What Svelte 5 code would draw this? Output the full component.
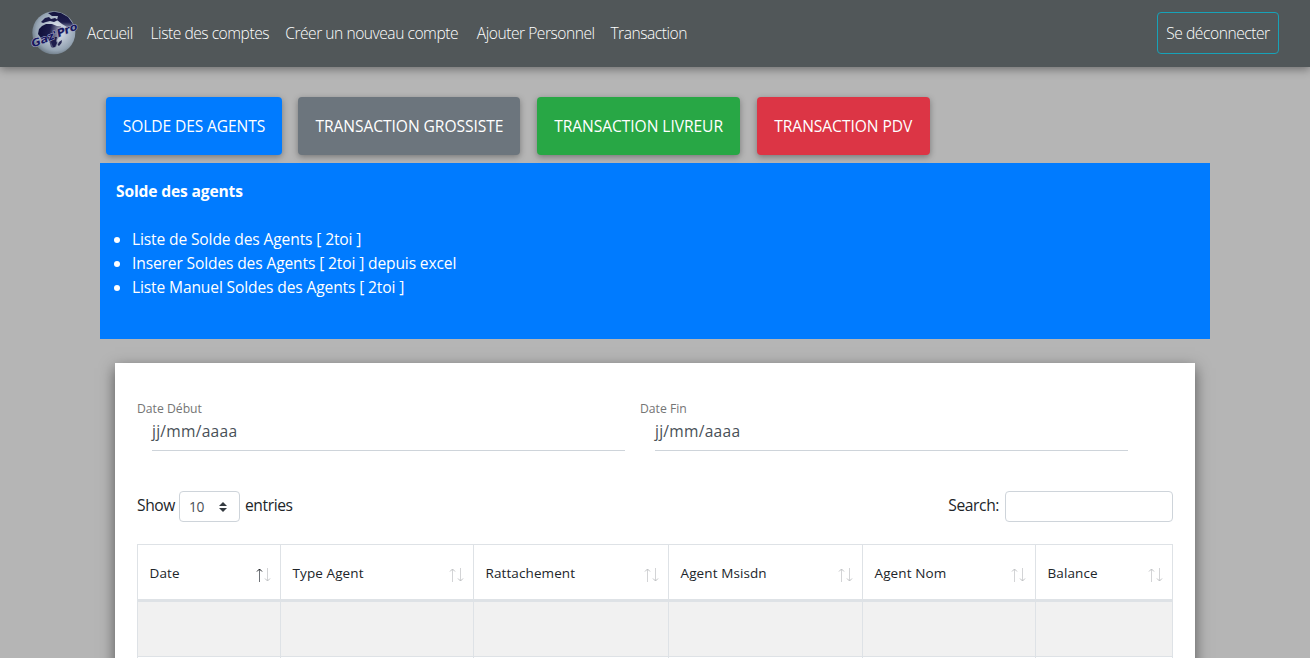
<script>
  const nav = [
    { label: 'Accueil', w: 48 },
    { label: 'Liste des comptes', w: 119 },
    { label: 'Créer un nouveau compte', w: 176 },
    { label: 'Ajouter Personnel', w: 118 },
    { label: 'Transaction', w: 75 }
  ];
  const tabs = [
    { label: 'SOLDE DES AGENTS', kind: 'primary', w: 176 },
    { label: 'TRANSACTION GROSSISTE', kind: 'secondary', w: 222 },
    { label: 'TRANSACTION LIVREUR', kind: 'success', w: 203.6 },
    { label: 'TRANSACTION PDV', kind: 'danger', w: 173 }
  ];
  const links = [
    'Liste de Solde des Agents [ 2toi ]',
    'Inserer Soldes des Agents [ 2toi ] depuis excel',
    'Liste Manuel Soldes des Agents [ 2toi ]'
  ];
  const columns = [
    { label: 'Date', sorted: true },
    { label: 'Type Agent' },
    { label: 'Rattachement' },
    { label: 'Agent Msisdn' },
    { label: 'Agent Nom' },
    { label: 'Balance' }
  ];
</script>

<header>
  <svg class="logo" width="48" height="48" viewBox="0 0 48 48" aria-label="Gaz'Pro">
    <defs>
      <radialGradient id="globe" cx="55%" cy="45%" r="58%">
        <stop offset="0" stop-color="#f0f2f8" />
        <stop offset=".45" stop-color="#b9c3d1" />
        <stop offset=".8" stop-color="#94a3b2" />
        <stop offset="1" stop-color="#6b7883" />
      </radialGradient>
      <linearGradient id="land" x1="0" y1="0" x2="1" y2=".2">
        <stop offset="0" stop-color="#0e0e38" />
        <stop offset=".5" stop-color="#1b1b4a" />
        <stop offset="1" stop-color="#1b1b4a" stop-opacity=".15" />
      </linearGradient>
      <linearGradient id="north" x1="0" y1="0" x2="0" y2="1">
        <stop offset="0" stop-color="#14143f" />
        <stop offset=".6" stop-color="#1c1c4c" />
        <stop offset="1" stop-color="#1c1c4c" stop-opacity=".2" />
      </linearGradient>
    </defs>
    <circle cx="23.8" cy="23.8" r="21.5" fill="url(#globe)" />
    <path d="M18 4 24 2.8 31 4 38 8 43 15 44 20 37 18 32 15 27 11 28 7 22 7Z" fill="url(#north)" />
    <path d="m11 13 4-4 4-1 2 2 4-1 3 2-4 2-4-1-4 1-3 1Z" fill="#191947" />
    <path d="m9 20 3-3 4-2 6 0 5 2 4 0 2 6-3 4-3 4 1 3-2 4-3 1-2-1-2-7-4-2-4 0-3-4Z" fill="url(#land)" />
    <path d="m21 28 6 0-1 4 1 2-2 4-2 0-2-5Z" fill="#1d1d4c" />
    <path d="m29 33 3-2-.5 3-2.5 3-1.5-1Z" fill="#252751" />
    <text x="3" y="38.5" transform="rotate(-22 3 38.5)" textLength="49" lengthAdjust="spacingAndGlyphs">Gaz'Pro</text>
  </svg>
  <nav>
    {#each nav as item}
      <span class="nav-item" style="width:{item.w}px">{item.label}</span>
    {/each}
  </nav>
  <button class="logout">Se déconnecter</button>
</header>

<main>
  <div class="tabs">
    {#each tabs as tab}
      <button class="tab {tab.kind}" style="width:{tab.w}px">{tab.label}</button>
    {/each}
  </div>
  <section class="panel">
    <h1>Solde des agents</h1>
    <ul>
      {#each links as link}<li>{link}</li>{/each}
    </ul>
  </section>
  <section class="card">
    <div class="dates">
      {#each ['Date Début', 'Date Fin'] as label}
        <div class="date">
          <span class="label">{label}</span>
          <div class="field">jj/mm/aaaa</div>
        </div>
      {/each}
    </div>
    <div class="tools">
      <div class="length">
        <span class="show">Show</span>
        <div class="select">
          <span>10</span>
          <svg width="8" height="10" viewBox="0 0 8 10"><path d="M0 4 4 0 8 4ZM0 6h8L4 10Z" fill="#343a40" /></svg>
        </div>
        <span class="entries">entries</span>
      </div>
      <div class="search"><span>Search:</span><input aria-label="Search" /></div>
    </div>
    <div class="table">
      {#each columns as col}
        <div class="th">
          <span>{col.label}</span>
          <svg width="16" height="16" viewBox="0 0 16 16" fill="none">
            <path d="M4.5 15V2" stroke={col.sorted ? '#6f7378' : '#d3d4d6'} />
            <path d="M2 4.5 4.5 2 7 4.5" stroke={col.sorted ? '#16191d' : '#bfc1c3'} />
            <path d="M12.5 1v13" stroke="#d3d4d6" />
            <path d="m10 11.5 2.5 2.5 2.5-2.5" stroke="#bfc1c3" />
          </svg>
        </div>
      {/each}
      {#each columns as _}<div class="td odd"></div>{/each}
      {#each columns as _}<div class="td"></div>{/each}
    </div>
  </section>
</main>

<style>
  :global(body) {
    background: #b5b5b5;
    overflow: hidden;
  }
  :global(#app) {
    height: 658px;
    overflow: hidden;
    font-family: 'Open Sans', 'Noto Sans', sans-serif;
    font-size: 15.6px;
    line-height: 24px;
    color: #212529;
  }
  :global(#app) * { box-sizing: border-box; }
  button { font: inherit; color: #fff; padding: 0; white-space: nowrap; }
  header {
    height: 67px;
    display: flex;
    align-items: center;
    padding: 0 31px 1px 30px;
    background: #515759;
    box-shadow: 0 2px 9px rgba(0, 0, 0, .42);
    position: relative;
    color: #fff;
    font-weight: 350;
  }
  .logo { flex: none; overflow: visible; }
  .logo text {
    font: italic bold 10.5px 'DejaVu Sans', sans-serif;
    fill: #17175f;
    stroke: #a9adc8;
    stroke-width: .9px;
    paint-order: stroke;
  }
  nav { display: flex; gap: 15.6px; margin-left: 9px; letter-spacing: -.47px; }
  .nav-item { white-space: nowrap; }
  .logout {
    margin-left: auto;
    width: 122px;
    height: 42px;
    border: 1px solid #17a2b8;
    border-radius: 4px;
    background: none;
    letter-spacing: -.45px;
  }
  main { padding: 30px 100px 0; }
  .tabs { display: flex; gap: 16.4px; padding-left: 6px; }
  .tab {
    height: 58px;
    border: 0;
    border-radius: 4px;
    box-shadow: 0 2px 6px rgba(0, 0, 0, .34);
    letter-spacing: -.06px;
  }
  .primary { background: #007bff; letter-spacing: -.12px; }
  .secondary { background: #6c757d; }
  .success { background: #28a745; }
  .danger { background: #dc3545; }
  .panel {
    margin-top: 8px;
    height: 176px;
    padding: 16px;
    background: #007bff;
    color: #fff;
  }
  h1 { margin: 0 0 24px; font-size: 15.6px; line-height: 24px; font-weight: 700; letter-spacing: -.15px; }
  ul { margin: 0; padding-left: 16px; letter-spacing: -.14px; }
  .card {
    margin: 24px 15px 0;
    height: 400px;
    padding: 36px 22px 0;
    background: #fff;
    box-shadow: 0 5px 14px rgba(0, 0, 0, .52);
  }
  .dates { display: grid; grid-template-columns: 503px 488px; }
  .label { display: block; font-size: 12.2px; line-height: 20px; color: #757575; }
  .field {
    margin: 0 0 0 15px;
    width: 473px;
    height: 32px;
    border-bottom: 1px solid #ced4da;
    line-height: 24px;
    color: #495057;
    letter-spacing: .25px;
  }
  .tools { display: flex; justify-content: space-between; margin-top: 40px; height: 31px; letter-spacing: -.4px; }
  .length, .search { display: flex; align-items: center; }
  .show, .entries, .search span { padding-bottom: 3px; }
  .show { width: 42px; }
  .select {
    width: 61px;
    height: 31px;
    display: flex;
    align-items: center;
    justify-content: space-between;
    padding: 0 12px 0 9px;
    border: 1px solid #ced4da;
    border-radius: 4px;
    font-size: 13.8px;
    color: #495057;
  }
  .entries { margin-left: 5px; }
  .search { gap: 6px; }
  input { width: 168px; height: 31px; border: 1px solid #ced4da; border-radius: 4px; }
  .table {
    margin-top: 22px;
    display: grid;
    grid-template-columns: 143px 193px 195px 194px 173px 138px;
    grid-template-rows: 58px 55px 55px;
  }
  .th, .td { border-left: 1px solid #dee2e6; }
  .th:nth-child(6n), .td:nth-child(6n) { border-right: 1px solid #dee2e6; }
  .th {
    border-top: 1px solid #dee2e6;
    border-bottom: 3px solid #dee2e6;
    display: flex;
    align-items: center;
    justify-content: space-between;
    padding: 1px 9px 0 11.5px;
    font-size: 13.5px;
    letter-spacing: .1px;
  }
  .th svg { margin-top: 4px; }
  .td { border-bottom: 1px solid #dee2e6; }
  .odd { background: #f1f1f1; }
</style>
